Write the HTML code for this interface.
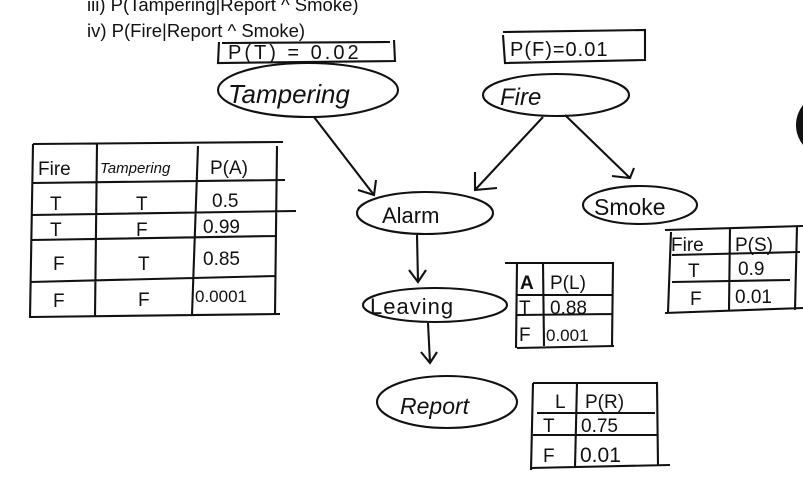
<!DOCTYPE html>
<html><head><style>
html,body{margin:0;padding:0;background:#fff;width:803px;height:487px;overflow:hidden}
svg{display:block}
text{font-family:"Liberation Sans",sans-serif;fill:#111}
</style></head><body>
<svg width="803" height="487" viewBox="0 0 803 487" xmlns="http://www.w3.org/2000/svg">
<g font-size="18.5" fill="#222">
<text x="87" y="11">iii) P(Tampering|Report ^ Smoke)</text>
<text x="87" y="37">iv) P(Fire|Report ^ Smoke)</text>
</g>
<circle cx="828" cy="125" r="32" fill="#111"/>
<g fill="none" stroke="#111" stroke-width="2.1">
<path d="M219 42 L218 63 L395 61 L394 40 M222 43 L390 42"/>
<path d="M503 35 L505 63 L645 60 L645 30 L503 32"/>
<ellipse cx="308" cy="90" rx="90" ry="27"/>
<ellipse cx="556" cy="95" rx="73" ry="21"/>
<ellipse cx="425" cy="213" rx="68" ry="21"/>
<ellipse cx="640" cy="205" rx="57" ry="19"/>
<ellipse cx="435" cy="305" rx="72" ry="17"/>
<ellipse cx="447" cy="402" rx="70" ry="26"/>
<path d="M314 117 L374 195 M358 190 L374 195 L376 180"/>
<path d="M543 117 L475 190 M475 172 L475 190 L497 188"/>
<path d="M565 115 L630 178 M612 176 L630 178 L634 168"/>
<path d="M417 235 L418 282 M409 270 L418 282 L426 270"/>
<path d="M428 323 L430 363 M421 352 L430 363 L437 352"/>
<path d="M33 144 L283 142 M33 144 L30 318 M97 144 L95 317 M198 146 L192 315 M277 146 L275 315 M32 183 L285 180 M32 215 L296 211 M32 240 L275 236 M30 282 L275 276 M31 317 L280 314"/>
<path d="M505 263 L614 263 M517 263 L516 348 M543 263 L544 346 M613 263 L612 346 M517 295 L613 295 M517 315 L613 314 M517 348 L614 346"/>
<path d="M533 383 L658 383 M533 383 L531 470 M577 383 L575 467 M657 383 L658 466 M537 413 L655 413 M533 435 L658 435 M531 468 L670 465"/>
<path d="M665 230 L803 226 M671 232 L668 312 M730 228 L729 310 M797 226 L795 310 M672 255 L800 252 M672 282 L790 280 M665 313 L803 308"/>
</g>
<g font-size="20">
<text x="228" y="59" letter-spacing="3">P(T) = 0.02</text>
<text x="510" y="56" letter-spacing="1">P(F)=0.01</text>
<text x="228" y="103" font-size="26" font-style="italic">Tampering</text>
<text x="500" y="105" font-size="24" font-style="italic">Fire</text>
<text x="382" y="223" font-size="22">Alarm</text>
<text x="594" y="215" font-size="23">Smoke</text>
<text x="370" y="314" font-size="22" letter-spacing="1">Leaving</text>
<text x="400" y="414" font-size="23" font-style="italic">Report</text>
</g>
<g font-size="19">
<text x="38" y="175">Fire</text><text x="100" y="173" font-size="15" font-style="italic">Tampering</text><text x="210" y="174">P(A)</text>
<text x="50" y="210">T</text><text x="136" y="210">T</text><text x="212" y="207">0.5</text>
<text x="50" y="236">T</text><text x="136" y="236">F</text><text x="203" y="233">0.99</text>
<text x="53" y="270">F</text><text x="138" y="270">T</text><text x="203" y="265">0.85</text>
<text x="53" y="307">F</text><text x="138" y="306">F</text><text x="195" y="302" font-size="17">0.0001</text>
<text x="520" y="289" font-weight="bold">A</text><text x="550" y="289">P(L)</text>
<text x="519" y="314">T</text><text x="550" y="314">0.88</text>
<text x="519" y="341">F</text><text x="546" y="341" font-size="17">0.001</text>
<text x="555" y="408">L</text><text x="585" y="408">P(R)</text>
<text x="543" y="432">T</text><text x="581" y="432">0.75</text>
<text x="543" y="462">F</text><text x="580" y="462" font-size="21">0.01</text>
<text x="671" y="251">Fire</text><text x="735" y="251">P(S)</text>
<text x="688" y="277">T</text><text x="738" y="275">0.9</text>
<text x="690" y="305">F</text><text x="735" y="303">0.01</text>
</g>
</svg>
</body></html>
